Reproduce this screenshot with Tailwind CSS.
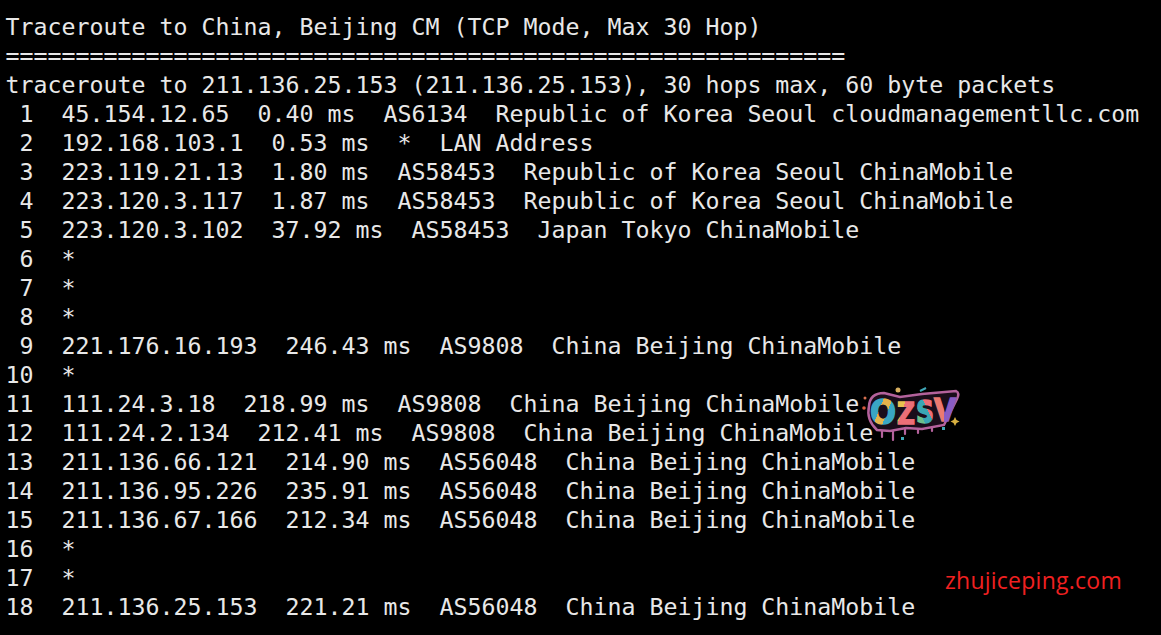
<!DOCTYPE html>
<html lang="en">
<head>
  <meta charset='utf-8'>
  <title>Traceroute</title>
  <script src="https://cdn.jsdelivr.net/npm/@tailwindcss/browser@4"></script>
</head>
<body class="w-[1161px] h-[635px] bg-black overflow-hidden relative">
  <pre class="pt-[12px] pl-[5.5px] font-['DejaVu_Sans_Mono',monospace] text-[23.25px] leading-[29px] text-[#e8e8e8]">Traceroute to China, Beijing CM (TCP Mode, Max 30 Hop)
============================================================
traceroute to 211.136.25.153 (211.136.25.153), 30 hops max, 60 byte packets
 1  45.154.12.65  0.40 ms  AS6134  Republic of Korea Seoul cloudmanagementllc.com
 2  192.168.103.1  0.53 ms  *  LAN Address
 3  223.119.21.13  1.80 ms  AS58453  Republic of Korea Seoul ChinaMobile
 4  223.120.3.117  1.87 ms  AS58453  Republic of Korea Seoul ChinaMobile
 5  223.120.3.102  37.92 ms  AS58453  Japan Tokyo ChinaMobile
 6  *
 7  *
 8  *
 9  221.176.16.193  246.43 ms  AS9808  China Beijing ChinaMobile
10  *
11  111.24.3.18  218.99 ms  AS9808  China Beijing ChinaMobile
12  111.24.2.134  212.41 ms  AS9808  China Beijing ChinaMobile
13  211.136.66.121  214.90 ms  AS56048  China Beijing ChinaMobile
14  211.136.95.226  235.91 ms  AS56048  China Beijing ChinaMobile
15  211.136.67.166  212.34 ms  AS56048  China Beijing ChinaMobile
16  *
17  *
18  211.136.25.153  221.21 ms  AS56048  China Beijing ChinaMobile</pre>

  <!-- logo watermark -->
  <svg class="absolute left-[860px] top-[384px]" width="104" height="60" viewBox="0 0 104 60">
    <defs>
      <linearGradient id="stripeO" x1="0" y1="0" x2="1" y2="0.6">
        <stop offset="0.45" stop-color="#3aa6c4"/><stop offset="0.45" stop-color="#e4b44c"/><stop offset="0.7" stop-color="#e4b44c"/><stop offset="0.7" stop-color="#3aa6c4"/>
      </linearGradient>
      <linearGradient id="stripeZ" x1="0" y1="0" x2="1" y2="0.7">
        <stop offset="0.4" stop-color="#e8c050"/><stop offset="0.4" stop-color="#ec6f78"/>
      </linearGradient>
      <linearGradient id="stripeS" x1="0" y1="1" x2="1" y2="0">
        <stop offset="0.35" stop-color="#6cc08c"/><stop offset="0.35" stop-color="#3aa6b4"/><stop offset="0.6" stop-color="#3aa6b4"/><stop offset="0.6" stop-color="#ec6f78"/>
      </linearGradient>
      <linearGradient id="stripeV" x1="0" y1="0" x2="1" y2="0">
        <stop offset="0.45" stop-color="#ec7a70"/><stop offset="0.45" stop-color="#8a5cc4"/>
      </linearGradient>
    </defs>
    <path d="M9 22 Q10 9 24 9 L40 13 L62 10 L96 7 Q100 9 97 15 L84 41 L62 45 L46 44 L30 47 L17 46 Q6 36 9 22Z" fill="#1a0d1a" stroke="#b4629c" stroke-width="2.500"/>
    <path d="M22 47v6M33 47v9M45 45v5M58 45v4M72 43v4" stroke="#b4629c" stroke-width="2.200" stroke-linecap="round"/>
    <circle cx="38" cy="6" r="2.500" fill="#d8b060"/>
    <path d="M60 7l6-3" stroke="#3fa8b8" stroke-width="2"/>
    <circle cx="4" cy="24" r="1.800" fill="#d85c40"/>
    <circle cx="5" cy="14" r="1.500" fill="#d87050"/>
    <path d="M95 33l1.500 3 3 1.500-3 1.500-1.500 3-1.500-3-3-1.500 3-1.500z" fill="#d8b040"/>
    <rect x="82" y="43" width="3" height="3" fill="#3fa8b8"/>
    <rect x="41" y="53" width="3" height="3" fill="#3fa8b8"/>
    <g class="font-['DejaVu_Sans',sans-serif] font-bold" stroke-width="1.500">
      <text x="10" y="40" font-size="33" textLength="26" lengthAdjust="spacingAndGlyphs" fill="url(#stripeO)" stroke="url(#stripeO)">O</text>
      <text x="37" y="40" font-size="31" textLength="18" lengthAdjust="spacingAndGlyphs" fill="url(#stripeZ)" stroke="url(#stripeZ)">Z</text>
      <text x="56" y="39" font-size="32" textLength="18" lengthAdjust="spacingAndGlyphs" fill="url(#stripeS)" stroke="url(#stripeS)">S</text>
      <text x="74" y="37" font-size="32" textLength="22" lengthAdjust="spacingAndGlyphs" fill="url(#stripeV)" stroke="url(#stripeV)">V</text>
    </g>
  </svg>

  <span class="absolute left-[945px] top-[565px] font-['Open_Sans',sans-serif] text-[23px] leading-[30px] tracking-[0.25px] text-[#f02020]">zhujiceping.com</span>
</body>
</html>
